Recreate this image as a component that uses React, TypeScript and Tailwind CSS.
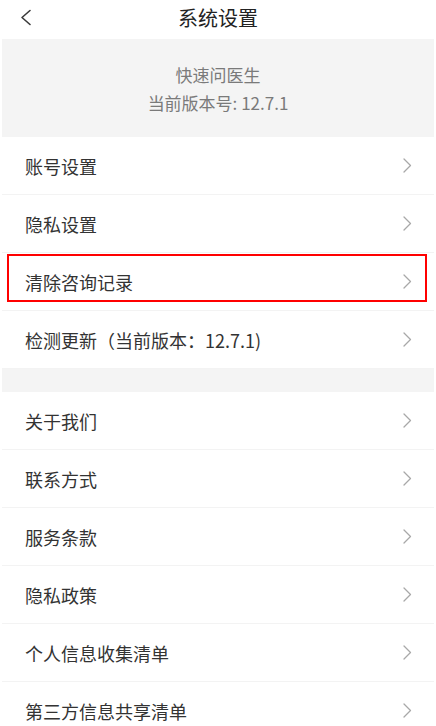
import React from "react";

const Chevron = () => (
  <svg width="9" height="15" viewBox="0 0 9 15" fill="none">
    <path d="M1 1 L7.5 7.5 L1 14" stroke="#a8a8a8" strokeWidth="1.3" strokeLinecap="round" strokeLinejoin="round" />
  </svg>
);

const Row = ({ label, highlight }: { label: string; highlight?: boolean }) => (
  <div className="relative flex h-[58px] items-center justify-between border-b border-[#f3f3f3] pl-[23px] pr-[22px] bg-white">
    <span className="text-[18px] text-[#333333] leading-none">{label}</span>
    <Chevron />
    {highlight && (
      <div className="pointer-events-none absolute left-[5px] right-[7px] top-[1px] h-[48px] border-2 border-[#ff0000]" />
    )}
  </div>
);

export default function App() {
  return (
    <div
      className="w-[436px] h-[726px] overflow-hidden bg-white px-[2px]"
      style={{ fontFamily: '"Noto Sans CJK SC", "Noto Sans", sans-serif' }}
    >
      <div className="relative flex h-[39px] items-center justify-center">
        <svg className="absolute left-[17px] top-[9px]" width="14" height="17" viewBox="0 0 14 17" fill="none">
          <path d="M11 1.5 L3 8.5 L11 15.5" stroke="#3a3a3a" strokeWidth="1.6" strokeLinecap="round" strokeLinejoin="round" />
        </svg>
        <span className="text-[20px] text-[#222222] leading-none -mt-[4px]">系统设置</span>
      </div>
      <div className="flex h-[98px] flex-col items-center justify-center gap-[9px] bg-[#f4f4f4] pt-[1px]">
        <span className="text-[17px] leading-[19px] text-[#7a7a7a]">快速问医生</span>
        <span className="text-[17px] leading-[19px] text-[#7a7a7a]">当前版本号: 12.7.1</span>
      </div>
      <Row label="账号设置" />
      <Row label="隐私设置" />
      <Row label="清除咨询记录" highlight />
      <Row label="检测更新（当前版本：12.7.1)" />
      <div className="h-[23px] bg-[#f4f4f4]" />
      <Row label="关于我们" />
      <Row label="联系方式" />
      <Row label="服务条款" />
      <Row label="隐私政策" />
      <Row label="个人信息收集清单" />
      <Row label="第三方信息共享清单" />
    </div>
  );
}
